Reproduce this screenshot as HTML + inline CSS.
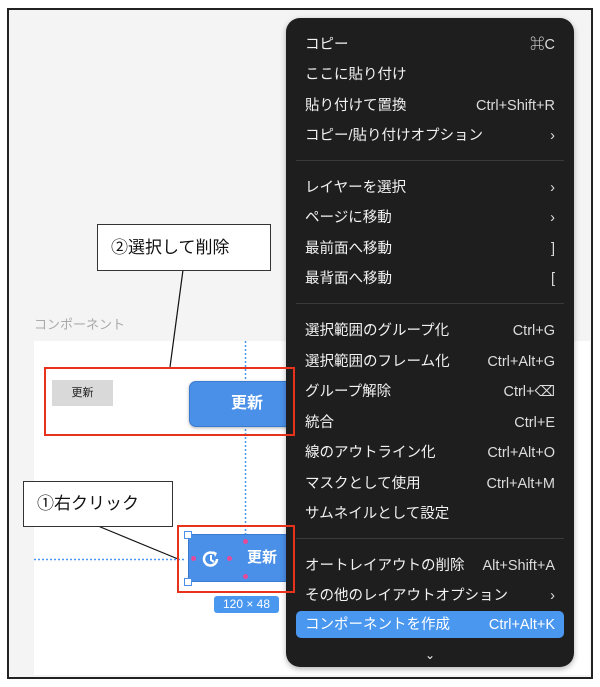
<!DOCTYPE html>
<html><head><meta charset="utf-8"><style>
*{margin:0;padding:0;box-sizing:border-box}
body{width:600px;height:687px;background:#fff;position:relative;overflow:hidden;font-family:"Liberation Sans","Noto Sans CJK JP",sans-serif}
.a{position:absolute}
#frame{left:7px;top:8px;width:586px;height:671px;border:2px solid #222;background:#f4f4f4}
#art{left:34px;top:341px;width:556px;height:334px;background:#fff}
#menu{left:286px;top:18px;width:288px;height:649px;background:#1e1e1e;border-radius:14px;box-shadow:0 2px 6px rgba(0,0,0,.3);color:#f2f2f2;font-size:14.5px}
.it{position:absolute;left:19px;right:19px;height:30px;line-height:30px}
.it span{position:absolute;right:0;top:0;color:#dcdcdc}
.sep{position:absolute;left:10px;right:10px;height:1px;background:#3a3a3a}
.hl{left:10px;right:10px;padding-left:9px;background:#4a97f0;border-radius:5px;color:#fff}
.hl span{right:9px;color:#fff}
.red{border:2.5px solid #e8321c;z-index:5}
.call{background:#fff;border:1px solid #333;font-size:17px;color:#111;z-index:6}
</style></head><body>
<div id="frame" class="a"></div>
<div class="a" style="left:34px;top:314px;font-size:13px;color:#aaa">コンポーネント</div>
<div id="art" class="a"></div>
<svg class="a" style="left:0;top:0" width="600" height="687"><line x1="245.5" y1="341" x2="245.5" y2="536" stroke="#4a97f0" stroke-width="1.5" stroke-dasharray="2 2"/><line x1="34" y1="559.5" x2="184" y2="559.5" stroke="#4a97f0" stroke-width="1.5" stroke-dasharray="2 2"/></svg>
<div class="a" style="left:52px;top:380px;width:61px;height:26px;background:#d9d9d9;font-size:11px;text-align:center;line-height:26px;color:#222">更新</div>
<div class="a" style="left:189px;top:381px;width:110px;height:46px;background:#4a90e8;border:1px solid #3a7bd0;border-radius:7px;color:#fff;font-size:16px;font-weight:bold;line-height:44px;padding-left:41px;box-shadow:0 1px 3px rgba(0,0,0,.3)">更新</div>
<div class="a" style="left:188px;top:534px;width:110px;height:48px;background:#4a90e8;border:1.5px solid #3a7bd0;color:#fff;font-size:15px;font-weight:bold;line-height:45px;padding-left:58px">更新</div>
<svg class="a" style="left:200px;top:548px" width="22" height="22" viewBox="0 0 22 22"><path d="M17 11a6.5 6.5 0 1 1-3-5.5" fill="none" stroke="#fff" stroke-width="2.5"/><path d="M13 3l4 2-2 4z" fill="#fff"/><path d="M11 7v5l3 2" fill="none" stroke="#fff" stroke-width="2"/></svg>
<div class="a" style="left:191px;top:556px;width:5px;height:5px;border-radius:50%;background:#e44a9a"></div>
<div class="a" style="left:227px;top:556px;width:5px;height:5px;border-radius:50%;background:#e44a9a"></div>
<div class="a" style="left:243px;top:539px;width:5px;height:5px;border-radius:50%;background:#e44a9a"></div>
<div class="a" style="left:243px;top:574px;width:5px;height:5px;border-radius:50%;background:#e44a9a"></div>
<div class="a" style="left:184px;top:531px;width:8px;height:8px;background:#fff;border:1px solid #4a90e8"></div>
<div class="a" style="left:184px;top:578px;width:8px;height:8px;background:#fff;border:1px solid #4a90e8"></div>
<div class="a" style="left:214px;top:596px;width:65px;height:17px;background:#4a97f0;border-radius:3px;color:#fff;font-size:12px;text-align:center;line-height:17px">120 × 48</div>
<div id="menu" class="a">
<div class="it" style="top:12px">コピー<span>⌘C</span></div>
<div class="it" style="top:42px">ここに貼り付け</div>
<div class="it" style="top:73px">貼り付けて置換<span>Ctrl+Shift+R</span></div>
<div class="it" style="top:103px">コピー/貼り付けオプション<span>›</span></div>
<div class="sep" style="top:142px"></div>
<div class="it" style="top:155px">レイヤーを選択<span>›</span></div>
<div class="it" style="top:185px">ページに移動<span>›</span></div>
<div class="it" style="top:216px">最前面へ移動<span>]</span></div>
<div class="it" style="top:246px">最背面へ移動<span>[</span></div>
<div class="sep" style="top:285px"></div>
<div class="it" style="top:298px">選択範囲のグループ化<span>Ctrl+G</span></div>
<div class="it" style="top:329px">選択範囲のフレーム化<span>Ctrl+Alt+G</span></div>
<div class="it" style="top:359px">グループ解除<span>Ctrl+⌫</span></div>
<div class="it" style="top:390px">統合<span>Ctrl+E</span></div>
<div class="it" style="top:420px">線のアウトライン化<span>Ctrl+Alt+O</span></div>
<div class="it" style="top:451px">マスクとして使用<span>Ctrl+Alt+M</span></div>
<div class="it" style="top:481px">サムネイルとして設定</div>
<div class="sep" style="top:520px"></div>
<div class="it" style="top:533px">オートレイアウトの削除<span>Alt+Shift+A</span></div>
<div class="it" style="top:563px">その他のレイアウトオプション<span>›</span></div>
<div class="it hl" style="top:593px;height:27px;line-height:28px">コンポーネントを作成<span>Ctrl+Alt+K</span></div>
<div class="it" style="top:622px;text-align:center;font-size:12px">⌄</div>
</div>
<div class="a red" style="left:44px;top:367px;width:251px;height:69px"></div>
<div class="a red" style="left:177px;top:525px;width:118px;height:68px"></div>
<svg class="a" style="left:0;top:0;z-index:4" width="600" height="687"><line x1="183" y1="270" x2="170" y2="367" stroke="#111" stroke-width="1.2"/><line x1="98" y1="526" x2="178" y2="559" stroke="#111" stroke-width="1.2"/></svg>
<div class="a call" style="left:97px;top:224px;width:174px;height:47px;line-height:45px;padding-left:13px">②選択して削除</div>
<div class="a call" style="left:23px;top:481px;width:150px;height:46px;line-height:44px;padding-left:13px">①右クリック</div>
</body></html>
